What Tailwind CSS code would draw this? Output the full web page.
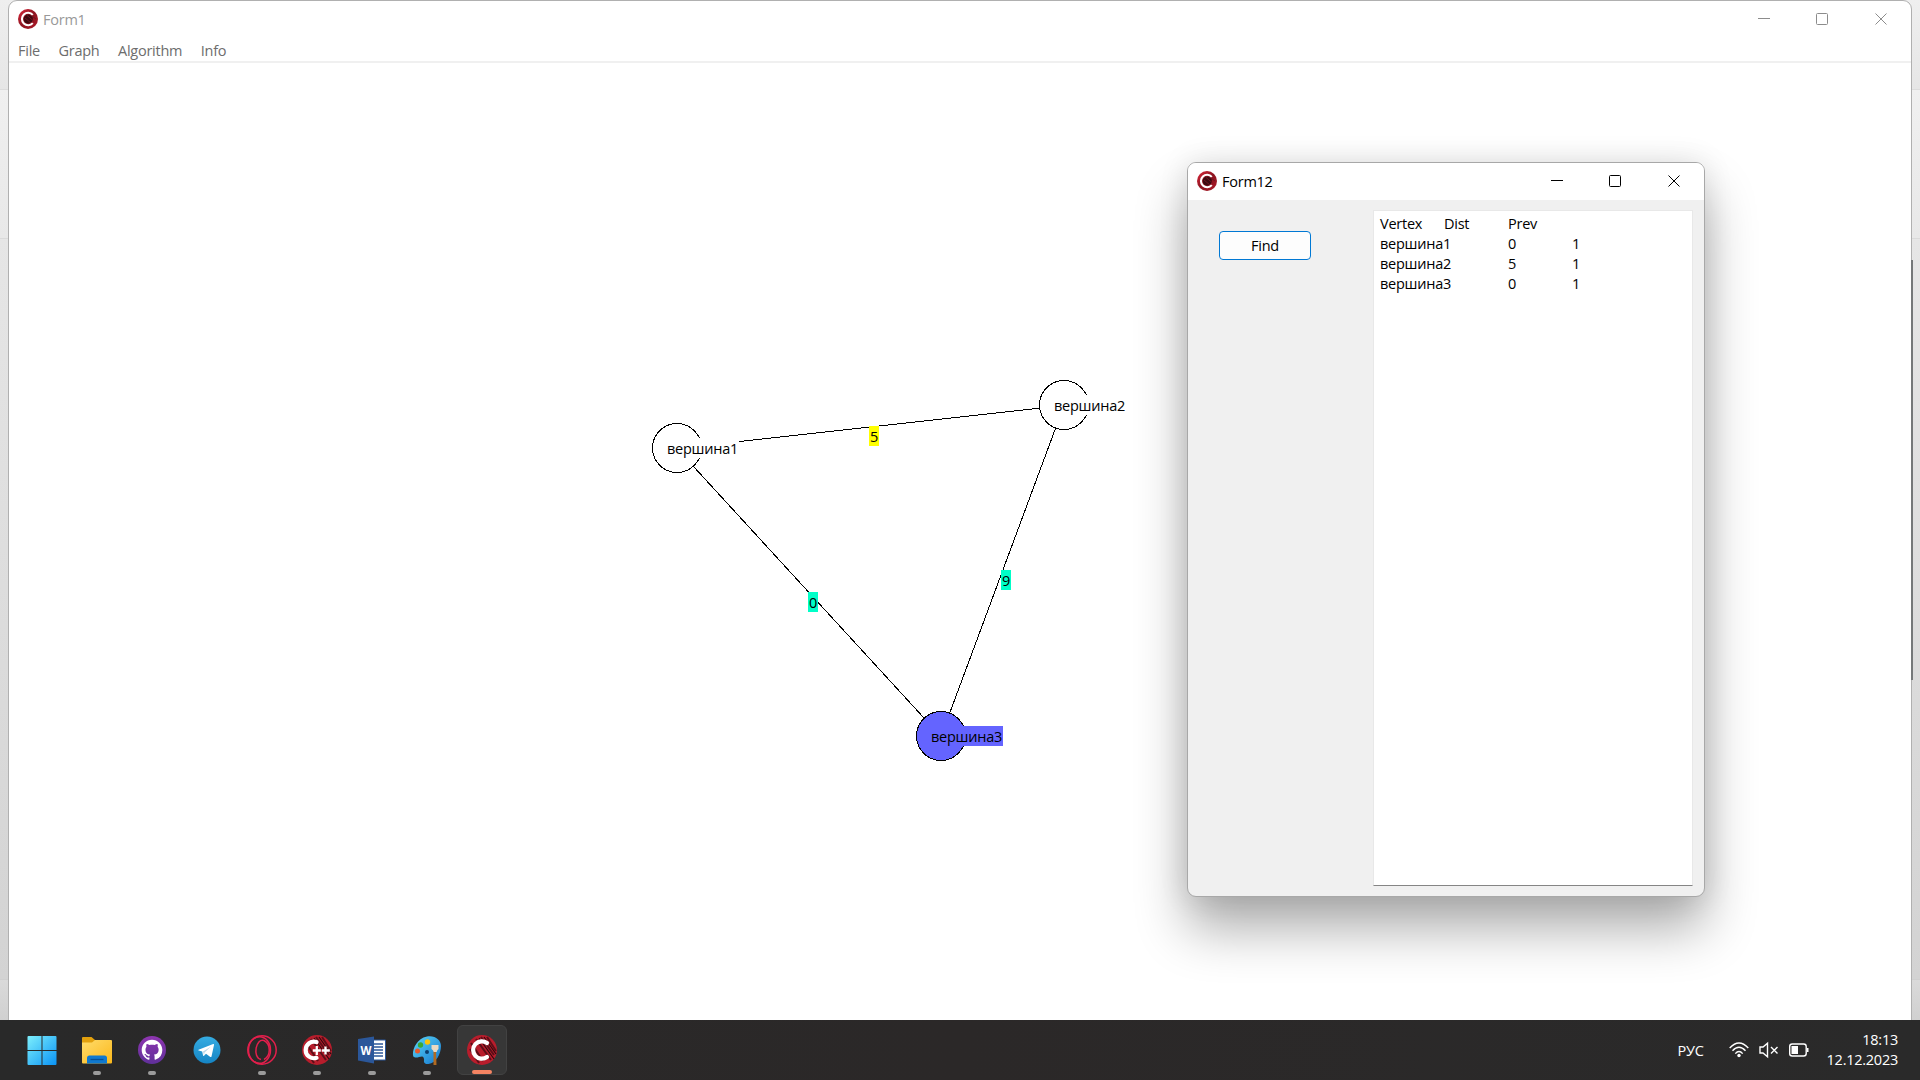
<!DOCTYPE html>
<html lang="ru">
<head>
<meta charset="utf-8">
<title>Form1</title>
<script src="https://cdn.jsdelivr.net/npm/@tailwindcss/browser@4"></script>
</head>
<body class="relative h-[1080px] w-[1920px] overflow-hidden bg-[#e4e4e4] font-['Open_Sans',sans-serif] text-[14.5px] tracking-[-0.25px] text-black">
<svg class="absolute size-0">
  <defs>
    <linearGradient id="red" x1="0" y1="0" x2="1" y2="1"><stop offset="0" stop-color="#e0283c"/><stop offset=".5" stop-color="#8c1420"/><stop offset="1" stop-color="#b01a28"/></linearGradient>
    <linearGradient id="win" x1="0" y1="0" x2="1" y2="1"><stop offset="0" stop-color="#7deffc"/><stop offset="1" stop-color="#0a93f5"/></linearGradient>
    <linearGradient id="fold" x1="0" y1="0" x2="1" y2="1"><stop offset="0" stop-color="#ffdc6b"/><stop offset="1" stop-color="#fbb81b"/></linearGradient>
    <linearGradient id="pal" x1="0" y1="0" x2="1" y2="1"><stop offset="0" stop-color="#5cd6f7"/><stop offset="1" stop-color="#1577cf"/></linearGradient>
    <linearGradient id="tg" x1="0" y1="0" x2="0" y2="1"><stop offset="0" stop-color="#35ace2"/><stop offset="1" stop-color="#1584c4"/></linearGradient>
    <linearGradient id="gh" x1="0" y1="0" x2="0" y2="1"><stop offset="0" stop-color="#8e35b0"/><stop offset="1" stop-color="#60309a"/></linearGradient>
    <symbol id="form" viewBox="0 0 20 20">
      <circle cx="10" cy="10" r="10" fill="url(#red)"/>
      <circle cx="10.3" cy="10" r="4.6" fill="#3c0a10"/>
      <path d="M8.5 6l7 6M7 9l6 5M11 5l7 5" stroke="#6f1420" stroke-width="1"/>
      <path d="M14.8 5.900A6.200 6.200 0 1 0 14.8 14.100" fill="none" stroke="#fff" stroke-width="2.100"/>
    </symbol>
    <symbol id="scribble" viewBox="0 0 30 30">
      <circle cx="15" cy="15" r="15" fill="#b81d2c"/>
      <path d="M4 8l12 18M9 4l15 21M14 2l13 18M20 2l9 14M3 14l9 14" stroke="#5c0f18" stroke-width="2"/>
      <path d="M12 3l15 21M17 2l12 17" stroke="#30080c" stroke-width="1.2"/>
    </symbol>
  </defs>
</svg>

<!-- edges of the window behind -->
<div class="absolute inset-x-0 top-0 h-[1020px] bg-[#dcdcdc]">
  <div class="h-[90px] border-b border-[#dcdcdc] bg-linear-to-b from-[#efefef] to-[#e6e6e6]"></div>
  <div class="h-[149px] border-b border-[#dadada] bg-linear-to-b from-[#f0f0f0] to-[#e8e8e8]"></div>
  <div class="h-[741px] border-b border-[#cfcfcf] bg-linear-to-b from-[#e6e6e6] to-[#d3d3d3]"></div>
  <div class="h-10 bg-linear-to-b from-[#dadada] to-[#d0d0d0]"></div>
</div>

<!-- Form1 -->
<main class="absolute left-2 top-0 h-[1030px] w-[1904px] rounded-t-[9px] border border-[#b0b0b0] bg-white">
  <header class="flex h-[37px] items-center pl-[9px] text-[#999]">
    <svg class="mb-px size-5"><use href="#form"/></svg>
    <span class="ml-[5px]">Form1</span>
    <svg class="mb-px ml-auto mr-[23px] h-3 w-[130px]" fill="none" stroke="#8c8c8c">
      <path d="M0 5.5h12"/><rect x="58.5" y=".5" width="11" height="11" rx="1"/><path d="M117.5.5l11 11m0-11l-11 11"/>
    </svg>
  </header>
  <nav class="flex h-[25px] items-center gap-[18.500px] border-b-2 border-[#f0f0f0] pl-[9px] pt-0.5 text-[#6d6d6d]">
    <span>File</span><span>Graph</span><span>Algorithm</span><span>Info</span>
  </nav>
</main>
<div class="absolute left-[1911px] top-[260px] h-[420px] w-0.5 bg-[#757879]"></div>

<!-- graph canvas -->
<section class="absolute left-0 top-0">
  <svg class="block" width="1180" height="800" fill="#fff" stroke="#000" shape-rendering="crispEdges">
    <path d="M677 448.500L1064 405.500L941 736.500Z"/>
    <circle cx="677" cy="448" r="24.500"/><circle cx="1064" cy="405" r="24.500"/><circle cx="941" cy="736" r="24.500" fill="#6464ff"/>
  </svg>
  <span class="absolute left-[667px] top-[438px] h-5 w-[72px] bg-white leading-[22px]">вершина1</span>
  <span class="absolute left-[1054px] top-[395px] h-5 w-[72px] bg-white leading-[22px]">вершина2</span>
  <span class="absolute left-[931px] top-[726px] h-5 w-[72px] bg-[#6464ff] leading-[22px]">вершина3</span>
  <span class="absolute left-[869px] top-[426px] h-5 w-2.5 bg-[#ffff00] pl-px leading-[22px]">5</span>
  <span class="absolute left-[808px] top-[592px] h-5 w-2.5 bg-[#00ffc8] pl-px leading-[22px]">0</span>
  <span class="absolute left-[1001px] top-[570px] h-5 w-2.5 bg-[#00ffc8] pl-px leading-[22px]">9</span>
</section>

<!-- Form12 -->
<section class="absolute left-[1187px] top-[162px] h-[735px] w-[518px] rounded-[9px] border border-[#a8a8a8] bg-[#f0f0f0] shadow-[0_32px_52px_rgba(0,0,0,0.32),0_0_30px_rgba(0,0,0,0.11)]">
  <header class="flex h-[37px] items-center rounded-t-lg bg-white pl-[9px]">
    <svg class="mb-px size-5"><use href="#form"/></svg>
    <span class="ml-[5px]">Form12</span>
    <svg class="mb-px ml-auto mr-[23px] h-3 w-[130px]" fill="none" stroke="#000">
      <path d="M0 5.5h12"/><rect x="58.5" y=".5" width="11" height="11" rx="1"/><path d="M117.5.5l11 11m0-11l-11 11"/>
    </svg>
  </header>
  <div class="flex items-start justify-between pl-[31px] pr-[11px] pt-[10px]">
    <button class="mt-[21px] h-[29px] w-[92px] rounded-[4px] border border-[#0078d4] bg-[#fdfdfd]">Find</button>
    <div class="h-[676px] w-[320px] border border-[#e8e8e8] border-b-[#858585] bg-white pl-[6px] pt-[3px] leading-5">
      <div class="flex"><span class="w-16">Vertex</span><span class="w-16">Dist</span><span>Prev</span></div>
      <div class="flex"><span class="w-32">вершина1</span><span class="w-16">0</span><span>1</span></div>
      <div class="flex"><span class="w-32">вершина2</span><span class="w-16">5</span><span>1</span></div>
      <div class="flex"><span class="w-32">вершина3</span><span class="w-16">0</span><span>1</span></div>
    </div>
  </div>
</section>

<!-- taskbar -->
<footer class="absolute inset-x-0 top-[1020px] flex h-[60px] items-center bg-linear-to-r from-[#292929] via-[#2b2828] to-[#2a2a2a] pl-[17px] pr-[22px] text-white">
  <div class="flex gap-[5px]">
    <div class="relative grid h-[50px] w-[50px] place-items-center"><svg width="30" height="30"><path d="M.5 2q0-1 1-1h13v14H.5zM15.500 1h13q1 0 1 1v13h-14zM.5 16h14v14h-13q-1 0-1-1zM15.500 16h14v13q0 1-1 1h-13z" fill="url(#win)"/></svg></div>
    <div class="relative grid h-[50px] w-[50px] place-items-center"><svg width="30" height="30"><path d="M0 3q0-1 1-1h8.500l3.500 3v5H0z" fill="#e2a00d"/><path d="M0 7.500h10l3-2.500h16q1 0 1 1v21.500q0 1-1 1H1q-1 0-1-1z" fill="url(#fold)"/><path d="M5 28.500v-5.500q0-2.500 2.500-2.500h15q2.500 0 2.500 2.500v5.500z" fill="#1079cf"/><path d="M8.500 24.500h13" stroke="#064f96" stroke-width="1.300"/></svg><i class="absolute bottom-0 h-1 w-2 rounded-full bg-[#9b9b9b]"></i></div>
    <div class="relative grid h-[50px] w-[50px] place-items-center"><svg width="28" height="28"><circle cx="14" cy="14" r="14" fill="url(#gh)"/><g transform="translate(3.700 3.700) scale(1.290)"><path fill="#fff" d="M8 0C3.580 0 0 3.580 0 8c0 3.540 2.290 6.530 5.470 7.590.4.070.55-.17.55-.38 0-.19-.01-.82-.01-1.490-2.010.37-2.530-.49-2.690-.94-.09-.23-.48-.94-.82-1.130-.28-.15-.68-.52-.01-.53.63-.01 1.080.58 1.230.82.72 1.210 1.870.87 2.330.66.070-.52.28-.87.510-1.070-1.780-.2-3.640-.89-3.640-3.950 0-.87.310-1.590.82-2.150-.08-.2-.36-1.020.08-2.120 0 0 .67-.21 2.200.82.64-.18 1.320-.27 2-.27s1.360.09 2 .27c1.530-1.040 2.200-.82 2.200-.82.44 1.100.16 1.920.08 2.120.51.560.82 1.270.82 2.150 0 3.070-1.870 3.750-3.650 3.950.29.250.54.730.54 1.480 0 1.070-.01 1.930-.01 2.200 0 .21.150.46.550.38A8.010 8.010 0 0 0 16 8c0-4.420-3.580-8-8-8z"/></g></svg><i class="absolute bottom-0 h-1 w-2 rounded-full bg-[#9b9b9b]"></i></div>
    <div class="relative grid h-[50px] w-[50px] place-items-center"><svg width="28" height="28"><circle cx="14" cy="14" r="13.500" fill="url(#tg)"/><path d="M5.500 13.800L20.200 8q1-.3.800.9l-2.500 11.500q-.4 1.100-1.500.4l-4-3-2 2q-.8.600-1-.5l-.8-3.800-3.500-1q-.9-.3-.2-.7z" fill="#fff"/><path d="M10 15.600l8-5-6.500 6-.5 3z" fill="#b9d6e8"/></svg></div>
    <div class="relative grid h-[50px] w-[50px] place-items-center"><svg width="30" height="30" fill="none" stroke="#e31f4c" stroke-width="1.500"><circle cx="15" cy="15" r="14.200"/><ellipse cx="12.500" cy="15" rx="11" ry="13.300"/><path d="M17 5.500c7 3.500 7 15.500 0 19M17 5.500c-8-3-12 17-3 19"/></svg><i class="absolute bottom-0 h-1 w-2 rounded-full bg-[#9b9b9b]"></i></div>
    <div class="relative grid h-[50px] w-[50px] place-items-center"><svg width="30" height="30"><use href="#scribble"/><path d="M14.500 7A8.300 8.300 0 1 0 14.500 22.800" fill="none" stroke="#fff" stroke-width="4.200" stroke-linecap="round"/><path d="M14.800 11v9m-4-4.500h8M23.500 11.500v8M19.800 15.500h8" stroke="#fff" stroke-width="2.300"/></svg><i class="absolute bottom-0 h-1 w-2 rounded-full bg-[#9b9b9b]"></i></div>
    <div class="relative grid h-[50px] w-[50px] place-items-center"><svg width="28" height="28"><path d="M15 4h12.500v20H15z" fill="#fff" stroke="#2b579a"/><path d="M16 8h9m-9 3h9m-9 3h9m-9 3h9m-9 3h9" stroke="#2b579a" stroke-width="1.300"/><path d="M0 3L16 .5v27L0 24.500z" fill="#2b579a"/><text x="2.500" y="18.500" font-size="12.500" font-weight="700" letter-spacing="0" fill="#fff" textLength="11" lengthAdjust="spacingAndGlyphs">W</text></svg><i class="absolute bottom-0 h-1 w-2 rounded-full bg-[#9b9b9b]"></i></div>
    <div class="relative grid h-[50px] w-[50px] place-items-center"><svg width="30" height="30"><path d="M15 1.500C23 0 29 5 29 11c0 8-5 17-12.500 18-3 .4-5-1-4.500-3.500.3-2-.5-4-2-4-3 0-5 2-8 .5C-1 20.500 2 4 15 1.500z" fill="url(#pal)"/><circle cx="15.500" cy="7" r="2.700" fill="#fcc30b"/><circle cx="8.500" cy="10" r="2.700" fill="#3aa935"/><circle cx="5.500" cy="16" r="2.500" fill="#e85a2a"/><circle cx="15" cy="17" r="2" fill="#0b3e6e"/><path d="M21.500 16H24l.5 14h-3z" fill="#b06a22"/><path d="M19.500 10h7v4q-1.500 1-1.800 3h-3q-.5-2-2.200-3z" fill="#ead9c2"/></svg><i class="absolute bottom-0 h-1 w-2 rounded-full bg-[#9b9b9b]"></i></div>
    <div class="relative grid h-[50px] w-[50px] place-items-center rounded-md border border-[#424242] bg-[#373737]"><svg width="30" height="30"><use href="#scribble"/><path d="M20 8A8.700 8.700 0 1 0 20 22" fill="none" stroke="#fff" stroke-width="4.200" stroke-linecap="round"/></svg><i class="absolute bottom-0 h-1 w-5 rounded-full bg-[#f58462]"></i></div>
  </div>
  <div class="ml-auto flex items-center">
    <span class="mr-[25px] pt-px">РУС</span>
    <svg width="80" height="20" fill="none" stroke="#fff" stroke-width="1.400">
      <path d="M.7 8q9.300-10 18.600 0M3.500 10.800q6.500-7 13 0M6.300 13.600q3.700-4.200 7.400 0"/><circle cx="10" cy="15.500" r="1.700" fill="#fff" stroke="none"/>
      <path d="M31 7h3l4.500-3.800v13.600L34 13h-3zM42 7l6.500 6.500m0-6.500L42 13.500"/>
      <rect x="60.700" y="4" width="16.500" height="12" rx="2.500"/><path d="M62.500 6h6.500v8h-6.500zM78 8h1.500v4H78z" fill="#fff" stroke="none"/>
    </svg>
    <div class="ml-[18px] text-right leading-5"><div>18:13</div><div>12.12.2023</div></div>
  </div>
</footer>
</body>
</html>
